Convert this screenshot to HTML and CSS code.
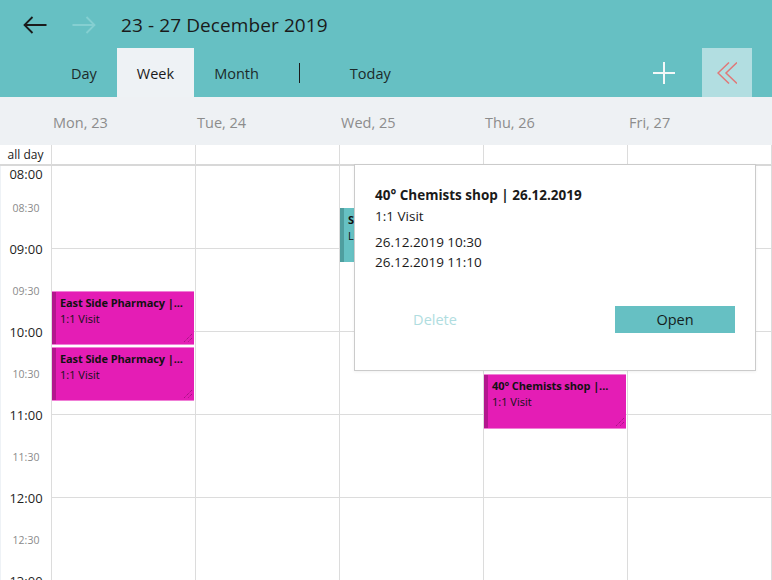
FILE: index.html
```html
<!DOCTYPE html>
<html lang="en">
<head>
<meta charset="utf-8">
<title>Week</title>
<link rel="stylesheet" href="styles.css">
</head>
<body>
<div class="app">
  <header class="topbar">
    <div class="nav-row">
      <span class="nav-icon back">
        <svg width="24" height="18" viewBox="0 0 24 18"><path d="M23.5 9H1.5M9.5 1L1.5 9l8 8" fill="none" stroke="currentColor" stroke-width="1.8"/></svg>
      </span>
      <span class="nav-icon fwd">
        <svg width="24" height="18" viewBox="0 0 24 18"><path d="M0.5 9h22M14.5 1l8 8-8 8" fill="none" stroke="currentColor" stroke-width="1.8"/></svg>
      </span>
      <h1 class="title">23 - 27 December 2019</h1>
    </div>
    <div class="tab-row">
      <nav class="tabs">
        <span class="tab">Day</span>
        <span class="tab active">Week</span>
        <span class="tab">Month</span>
        <span class="sep"></span>
        <span class="tab">Today</span>
      </nav>
      <div class="actions">
        <span class="add-btn">
          <svg width="22" height="22" viewBox="0 0 22 22"><path d="M11 0v22M0 11h22" stroke="currentColor" stroke-width="2"/></svg>
        </span>
        <span class="collapse-btn">
          <svg width="20" height="22" viewBox="0 0 20 22"><path d="M12 0.5L1 11l11 10.5M20 0.5L9 11l11 10.5" fill="none" stroke="currentColor" stroke-width="1.5"/></svg>
        </span>
      </div>
    </div>
  </header>

  <div class="day-head">
    <span class="corner"></span>
    <span class="day-name">Mon, 23</span>
    <span class="day-name">Tue, 24</span>
    <span class="day-name">Wed, 25</span>
    <span class="day-name">Thu, 26</span>
    <span class="day-name">Fri, 27</span>
  </div>

  <div class="allday">
    <span class="allday-label">all day</span>
    <span class="allday-cell"></span>
    <span class="allday-cell"></span>
    <span class="allday-cell"></span>
    <span class="allday-cell"></span>
    <span class="allday-cell"></span>
    <span class="allday-cell"></span>
  </div>

  <div class="hours">
    <div class="time-col">
      <span class="t-hour first">08:00</span>
      <span class="t-half">08:30</span>
      <span class="t-hour">09:00</span>
      <span class="t-half">09:30</span>
      <span class="t-hour">10:00</span>
      <span class="t-half">10:30</span>
      <span class="t-hour">11:00</span>
      <span class="t-half">11:30</span>
      <span class="t-hour">12:00</span>
      <span class="t-half">12:30</span>
      <span class="t-hour">13:00</span>
    </div>

    <div class="day-col">
      <div class="slot"></div><div class="slot"></div><div class="slot"></div><div class="slot"></div><div class="slot"></div><div class="slot"></div>
      <div class="event pink" style="top:125px;height:54px">
        <span class="ev-title">East Side Pharmacy |...</span>
        <span class="ev-sub">1:1 Visit</span>
        <svg class="grip" width="9" height="9" viewBox="0 0 9 9"><path d="M9 1L1 9M9 5L5 9" stroke="#8e1272" stroke-width="1" stroke-dasharray="1 1"/></svg>
      </div>
      <div class="event pink" style="top:181px;height:54px">
        <span class="ev-title">East Side Pharmacy |...</span>
        <span class="ev-sub">1:1 Visit</span>
        <svg class="grip" width="9" height="9" viewBox="0 0 9 9"><path d="M9 1L1 9M9 5L5 9" stroke="#8e1272" stroke-width="1" stroke-dasharray="1 1"/></svg>
      </div>
    </div>

    <div class="day-col">
      <div class="slot"></div><div class="slot"></div><div class="slot"></div><div class="slot"></div><div class="slot"></div><div class="slot"></div>
    </div>

    <div class="day-col">
      <div class="slot"></div><div class="slot"></div><div class="slot"></div><div class="slot"></div><div class="slot"></div><div class="slot"></div>
      <div class="event teal" style="top:42px;height:54px">
        <span class="ev-title">Sunrise Pharmacy |...</span>
        <span class="ev-sub">Lunch</span>
      </div>
    </div>

    <div class="day-col">
      <div class="slot"></div><div class="slot"></div><div class="slot"></div><div class="slot"></div><div class="slot"></div><div class="slot"></div>
      <div class="event pink" style="top:208px;height:55px">
        <span class="ev-title">40° Chemists shop |...</span>
        <span class="ev-sub">1:1 Visit</span>
        <svg class="grip" width="9" height="9" viewBox="0 0 9 9"><path d="M9 1L1 9M9 5L5 9" stroke="#8e1272" stroke-width="1" stroke-dasharray="1 1"/></svg>
      </div>
    </div>

    <div class="day-col">
      <div class="slot"></div><div class="slot"></div><div class="slot"></div><div class="slot"></div><div class="slot"></div><div class="slot"></div>
    </div>

    <div class="day-col edge">
      <div class="slot"></div><div class="slot"></div><div class="slot"></div><div class="slot"></div><div class="slot"></div><div class="slot"></div>
    </div>
  </div>

  <div class="popup">
    <div class="pop-title">40° Chemists shop | 26.12.2019</div>
    <div class="pop-line">1:1 Visit</div>
    <div class="pop-dates">
      <div class="pop-line">26.12.2019 10:30</div>
      <div class="pop-line">26.12.2019 11:10</div>
    </div>
    <div class="pop-actions">
      <span class="btn-delete">Delete</span>
      <span class="btn-open">Open</span>
    </div>
  </div>
</div>
</body>
</html>
```

FILE: styles.css
```css
* { box-sizing: border-box; }
html, body { margin: 0; padding: 0; }
body {
  font-family: "Open Sans", "Noto Sans", sans-serif;
  color: #1a1a1a;
  background: #fff;
}
.app {
  position: relative;
  width: 772px;
  height: 580px;
  overflow: hidden;
}

/* top bar */
.topbar { background: #66c0c3; }
.nav-row {
  height: 48px;
  display: flex;
  align-items: center;
  padding-left: 23px;
}
.nav-icon { display: flex; width: 24px; height: 18px; margin-top: 2px; }
.nav-icon.back { color: #1b1b1b; margin-right: 25px; }
.nav-icon.fwd { color: #85cfd1; margin-right: 25px; }
.title {
  margin: 0;
  font-size: 19px;
  font-weight: 400;
  letter-spacing: 0.1px;
  color: #1a1a1a;
  margin-top: 2px;
}
.tab-row {
  height: 49px;
  display: flex;
  justify-content: space-between;
  padding-left: 51px;
}
.tabs { display: flex; align-items: stretch; }
.tab {
  display: flex;
  align-items: center;
  padding: 1px 20px 0;
  font-size: 14.5px;
  color: #1c2a2a;
}
.tab.active { background: #eef2f5; color: #1a1a1a; }
.sep {
  width: 1px;
  height: 20px;
  background: #1b1b1b;
  align-self: center;
  margin: 0 30px 0 20px;
}
.actions { display: flex; align-items: stretch; margin-right: 20px; }
.add-btn {
  width: 50px;
  display: flex;
  align-items: center;
  justify-content: center;
  color: #f4f8f8;
  margin-right: 13px;
}
.collapse-btn {
  width: 50px;
  background: #b2dee1;
  display: flex;
  align-items: center;
  justify-content: center;
  color: #e07878;
}

/* day header */
.day-head {
  height: 48px;
  background: #eef1f4;
  display: grid;
  grid-template-columns: 51px repeat(5, 144px) 1fr;
  align-items: center;
}
.day-name {
  padding-left: 2px;
  padding-top: 2px;
  font-size: 14.5px;
  color: #8c8c8c;
}

/* all day row */
.allday {
  display: grid;
  grid-template-columns: 51px repeat(5, 144px) 1fr;
  height: 21px;
  border-bottom: 2px solid #d8d8d8;
}
.allday-label {
  font-size: 12px;
  text-align: center;
  line-height: 20px;
  color: #1a1a1a;
}
.allday-cell { border-left: 1px solid #dcdcdc; }

/* hours */
.hours {
  display: grid;
  grid-template-columns: 51px repeat(5, 144px) 1fr;
  height: 420px;
}
.time-col {
  display: flex;
  flex-direction: column;
  align-items: center;
  border-left: 1px solid #eef2f6;
}
.t-hour, .t-half {
  height: 41.5px;
  display: flex;
  align-items: center;
  justify-content: center;
}
.t-hour { font-size: 13px; color: #1f1f1f; }
.t-half { font-size: 10.5px; color: #8a8a8a; }
.t-hour.first { height: 16px; margin-bottom: 4.75px; }

.day-col {
  position: relative;
  border-left: 1px solid #dcdcdc;
}
.slot { height: 83px; border-bottom: 1px solid #dcdcdc; }

.event {
  position: absolute;
  left: 0;
  right: 1px;
  display: flex;
  flex-direction: column;
  padding: 4px 6px 0 8px;
  overflow: hidden;
  white-space: nowrap;
  color: #111;
}
.event.pink {
  background: #e41db5;
  border-top: 1px solid #f07fd6;
  border-bottom: 1px solid #f07fd6;
  box-shadow: inset 4px 0 0 #b3178e;
  padding-top: 3px;
}
.event.teal {
  background: #66c1c3;
  box-shadow: inset 4px 0 0 #4f9e9f;
}
.ev-title { font-size: 11px; font-weight: 700; line-height: 16px; letter-spacing: -0.1px; }
.ev-sub { font-size: 11px; line-height: 16px; }
.grip { position: absolute; right: 2px; bottom: 2px; }

/* popup */
.popup {
  position: absolute;
  left: 354px;
  top: 164px;
  width: 402px;
  height: 207px;
  background: #fff;
  border: 1px solid #cbcbcb;
  padding: 20px 20px 0 20px;
  box-shadow: 0 1px 3px rgba(0,0,0,0.06);
}
.pop-title { font-size: 13.5px; font-weight: 700; line-height: 21px; }
.pop-line { font-size: 13.5px; line-height: 20px; }
.pop-dates { margin-top: 6px; }
.pop-actions {
  display: flex;
  justify-content: space-between;
  margin-top: 34px;
}
.btn-delete, .btn-open {
  width: 120px;
  height: 27px;
  display: flex;
  align-items: center;
  justify-content: center;
  font-size: 14.5px;
}
.btn-delete { color: #b0dde0; }
.btn-open { background: #66c0c3; color: #142020; }
```
